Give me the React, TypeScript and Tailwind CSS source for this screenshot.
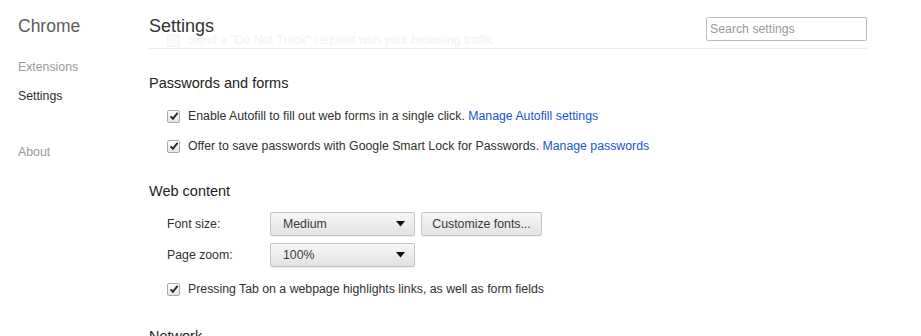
import { ReactNode } from 'react'

const Check = ({ faded }: { faded?: boolean }) => (
    <span
        className={`w-[13px] h-[13px] shrink-0 rounded-[2px] border flex items-center justify-center
        ${faded ? 'border-[#f2f2f2] bg-[#fafafa]' : 'border-[#a9a9a9] bg-gradient-to-b from-[#fdfdfd] to-[#e4e4e4]'}`}
    >
        {!faded && (
            <svg width="10" height="10" viewBox="0 0 10 10">
                <path d="M1.6 5.4 L3.9 7.8 L8.6 1.9" fill="none" stroke="#2b2b2b" strokeWidth="2" />
            </svg>
        )}
    </span>
)

const CheckRow = ({ children }: { children: ReactNode }) => (
    <div className="flex items-center gap-[8px] pl-[18px] h-[18px] leading-[18px]">
        <Check />
        <span>{children}</span>
    </div>
)

const Link = ({ children }: { children: ReactNode }) => (
    <span className="text-[#1a55cf] cursor-pointer">{children}</span>
)

const Select = ({ value }: { value: string }) => (
    <div className="w-[145px] h-[24px] flex items-center justify-between pl-[12px] pr-[9px] rounded-[2px]
    border border-[#c4c4c4] bg-gradient-to-b from-[#f6f6f6] to-[#e3e3e3] shadow-[0_1px_0_rgba(0,0,0,0.06)] text-[#3a3a3a]">
        <span>{value}</span>
        <svg width="9" height="6" viewBox="0 0 9 6">
            <path d="M0 0 H9 L4.5 5.5 Z" fill="#111" />
        </svg>
    </div>
)

const App = () => {
    return (
        <div className="flex h-[336px] w-[921px] overflow-hidden bg-white text-[12.3px] text-[#303030]"
            style={{ fontFamily: '"Liberation Sans", Arial, sans-serif' }}>
            <div className="w-[149px] shrink-0 pl-[18px] flex flex-col *:shrink-0">
                <div className="mt-[14px] text-[17.5px] leading-[24px] text-[#5c5c5c]">Chrome</div>
                <div className="mt-[20px] leading-[18px] text-[#999]">Extensions</div>
                <div className="mt-[11px] leading-[18px] text-[#303030]">Settings</div>
                <div className="mt-[38px] leading-[18px] text-[#999]">About</div>
            </div>

            <div className="w-[718px] shrink-0 flex flex-col *:shrink-0">
                <div className="relative h-[49px] border-b border-[#ececec] flex justify-between items-start">
                    <div className="absolute left-[18px] top-[31px] flex items-center gap-[8px] text-[#f2f2f2]">
                        <Check faded />
                        <span>Send a "Do Not Track" request with your browsing traffic</span>
                    </div>
                    <div className="relative mt-[14px] text-[18px] leading-[24px] text-[#333]">Settings</div>
                    <input
                        placeholder="Search settings"
                        className="relative mt-[17px] w-[161px] h-[24px] px-[3px] rounded-[2px] border border-[#bdbdbd]
                        bg-white text-[12.3px] placeholder:text-[#9a9a9a] outline-none"
                    />
                </div>

                <div className="mt-[24px] text-[14.5px] leading-[20px] text-[#222]">Passwords and forms</div>
                <div className="mt-[14px] flex flex-col gap-[12px]">
                    <CheckRow>
                        Enable Autofill to fill out web forms in a single click. <Link>Manage Autofill settings</Link>
                    </CheckRow>
                    <CheckRow>
                        Offer to save passwords with Google Smart Lock for Passwords. <Link>Manage passwords</Link>
                    </CheckRow>
                </div>

                <div className="mt-[26px] text-[14.5px] leading-[20px] text-[#222]">Web content</div>
                <div className="mt-[11px] pl-[18px] flex flex-col gap-[7px]">
                    <div className="flex items-center">
                        <span className="w-[103px]">Font size:</span>
                        <Select value="Medium" />
                        <button className="ml-[6px] w-[121px] h-[24px] rounded-[2px] border border-[#c4c4c4]
                        bg-gradient-to-b from-[#f6f6f6] to-[#e3e3e3] shadow-[0_1px_0_rgba(0,0,0,0.06)] text-[#3a3a3a]">
                            Customize fonts...
                        </button>
                    </div>
                    <div className="flex items-center">
                        <span className="w-[103px]">Page zoom:</span>
                        <Select value="100%" />
                    </div>
                </div>
                <div className="mt-[13px]">
                    <CheckRow>Pressing Tab on a webpage highlights links, as well as form fields</CheckRow>
                </div>

                <div className="mt-[28px] text-[14.5px] leading-[20px] text-[#222]">Network</div>
            </div>
        </div>
    )
}

export default App
